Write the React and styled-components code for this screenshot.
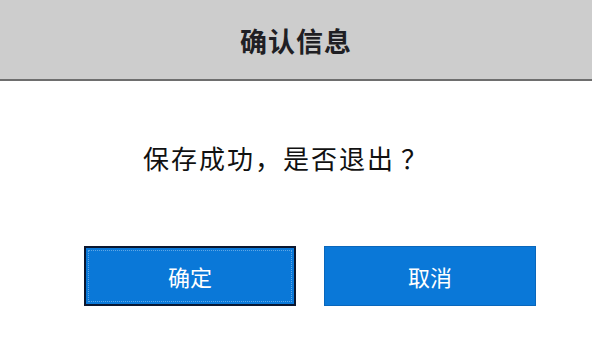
import React from 'react'
import styled, { createGlobalStyle } from 'styled-components'

const GlobalStyle = createGlobalStyle`
  html, body {
    margin: 0;
    padding: 0;
    background: #ffffff;
  }
  body {
    font-family: "Noto Sans CJK SC", "Noto Sans", sans-serif;
  }
`

const Dialog = styled.div`
  width: 592px;
  height: 342px;
  display: flex;
  flex-direction: column;
  background: #ffffff;
`

const Header = styled.div`
  height: 81px;
  box-sizing: border-box;
  background: #cdcdcd;
  border-bottom: 2px solid #6e6e6e;
  display: flex;
  align-items: center;
  justify-content: center;
  padding-top: 2px;
  font-size: 27px;
  letter-spacing: 1px;
  font-weight: 700;
  color: #1f1f24;
`

const Message = styled.p`
  margin: 0;
  padding: 62px 20px 0 0;
  text-align: center;
  font-size: 26px;
  letter-spacing: 2px;
  line-height: 30px;
  color: #111111;
`

const Mark = styled.span`
  margin-left: 6px;
`

const Actions = styled.div`
  display: flex;
  gap: 28px;
  padding: 73px 0 0 84px;
`

const Button = styled.button`
  width: 212px;
  height: 60px;
  box-sizing: border-box;
  background: #0a78d8;
  color: #ffffff;
  font-family: inherit;
  font-size: 22px;
  border: ${p => (p.$focused ? '2px solid #0b1730' : '1px solid #0a67bb')};
  outline: ${p => (p.$focused ? '1px dotted rgba(255,255,255,0.35)' : 'none')};
  outline-offset: -5px;
  display: flex;
  align-items: center;
  justify-content: center;
  padding: 0;
`

const App = () => {
  return (
    <Dialog>
      <GlobalStyle />
      <Header>确认信息</Header>
      <Message>
        保存成功，是否退出<Mark>？</Mark>
      </Message>
      <Actions>
        <Button $focused>确定</Button>
        <Button>取消</Button>
      </Actions>
    </Dialog>
  )
}

export default App
